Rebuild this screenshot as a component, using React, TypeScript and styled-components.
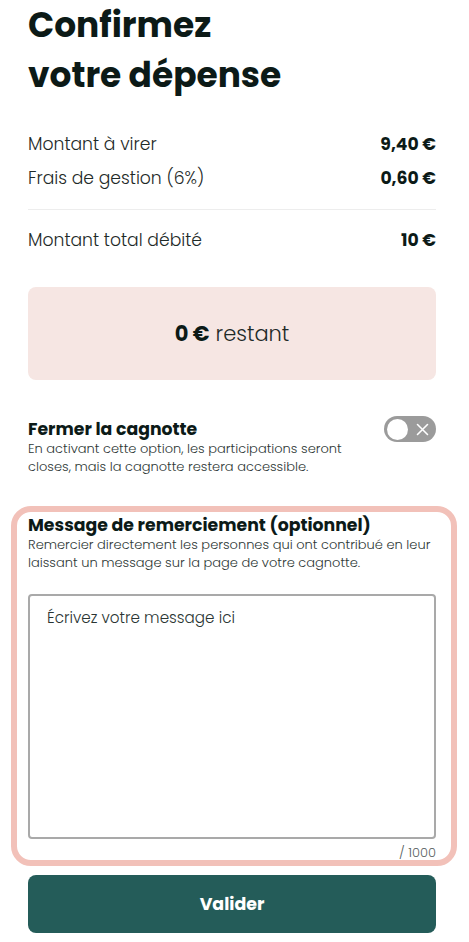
import React from "react";
import styled, { createGlobalStyle } from "styled-components";

const Global = createGlobalStyle`
  html, body { margin: 0; padding: 0; background: #ffffff; }
  body { font-family: "Poppins", "Inter", "Noto Sans", sans-serif; color: #0f1c1a; }
  * { box-sizing: border-box; }
`;

const Page = styled.div`
  width: 408px;
  margin-left: 28px;
  display: flex;
  flex-direction: column;
`;

const Title = styled.h1`
  margin: 0;
  font-size: 34.4px;
  line-height: 50px;
  font-weight: 700;
  color: #0c1a17;
`;

const Summary = styled.div`
  margin-top: 32px;
  display: flex;
  flex-direction: column;
  gap: 10px;
`;

const Row = styled.div`
  display: flex;
  justify-content: space-between;
  align-items: center;
  height: 24px;
  font-size: 17.2px;
`;

const Label = styled.span`
  font-weight: 300;
  color: #1e2a28;
`;

const Value = styled.span`
  font-weight: 700;
  color: #0c1a17;
`;

const Divider = styled.hr`
  border: none;
  height: 1px;
  background: #ededed;
  margin: 19px 0 18px;
`;

const Remaining = styled.div`
  margin-top: 35px;
  height: 93px;
  border-radius: 8px;
  background: #f6e6e3;
  display: flex;
  align-items: center;
  justify-content: center;
  font-size: 21px;
  font-weight: 300;
  color: #1e2a28;
  gap: 6px;
`;

const Strong = styled.strong`
  font-weight: 700;
  color: #0c1a17;
`;

const OptionRow = styled.div`
  margin-top: 38px;
  display: flex;
  justify-content: space-between;
  align-items: flex-start;
`;

const OptionText = styled.div`
  display: flex;
  flex-direction: column;
  max-width: 340px;
`;

const SectionTitle = styled.div`
  font-size: 17.3px;
  line-height: 22px;
  font-weight: 700;
  color: #0c1a17;
`;

const Desc = styled.div`
  font-size: 13px;
  line-height: 18px;
  font-weight: 300;
  color: #2e3836;
`;

const Toggle = styled.div`
  width: 52px;
  height: 26px;
  border-radius: 13px;
  background: #9b9b9b;
  margin-top: -2px;
  display: flex;
  align-items: center;
  justify-content: space-between;
  padding: 0 7px 0 3px;
`;

const Knob = styled.div`
  width: 21px;
  height: 21px;
  border-radius: 50%;
  background: #ffffff;
`;

const Frame = styled.div`
  margin: 30px -21px 0 -17px;
  border: 6px solid #f2c1b9;
  border-radius: 20px;
  padding: 2px 15px 0 11px;
  display: flex;
  flex-direction: column;
`;

const TextArea = styled.div`
  margin-top: 22px;
  height: 245px;
  border: 2px solid #a9a9a9;
  border-radius: 4px;
  padding: 11px 17px;
  font-size: 15.2px;
  line-height: 22px;
  font-weight: 300;
  color: #2a3533;
`;

const Counter = styled.div`
  margin-top: 7px;
  text-align: right;
  font-size: 13px;
  line-height: 14px;
  font-weight: 300;
  color: #56605e;
`;

const Button = styled.button`
  margin-top: 9px;
  height: 58px;
  border: none;
  border-radius: 8px;
  background: #245c59;
  color: #ffffff;
  font-family: inherit;
  font-size: 17.4px;
  font-weight: 700;
`;

export default function App() {
  return (
    <>
      <Global />
      <Page>
        <Title>
          Confirmez
          <br />
          votre dépense
        </Title>
        <Summary>
          <Row>
            <Label>Montant à virer</Label>
            <Value>9,40 €</Value>
          </Row>
          <Row>
            <Label>Frais de gestion (6%)</Label>
            <Value>0,60 €</Value>
          </Row>
        </Summary>
        <Divider />
        <Row>
          <Label>Montant total débité</Label>
          <Value>10 €</Value>
        </Row>
        <Remaining>
          <Strong>0 €</Strong> restant
        </Remaining>
        <OptionRow>
          <OptionText>
            <SectionTitle>Fermer la cagnotte</SectionTitle>
            <Desc>
              En activant cette option, les participations seront
              <br />
              closes, mais la cagnotte restera accessible.
            </Desc>
          </OptionText>
          <Toggle>
            <Knob />
            <svg width="13" height="13" viewBox="0 0 13 13">
              <path d="M1.5 1.5 L11.5 11.5 M11.5 1.5 L1.5 11.5" stroke="#fff" strokeWidth="1.6" strokeLinecap="round" />
            </svg>
          </Toggle>
        </OptionRow>
        <Frame>
          <SectionTitle>Message de remerciement (optionnel)</SectionTitle>
          <Desc>
            Remercier directement les personnes qui ont contribué en leur
            <br />
            laissant un message sur la page de votre cagnotte.
          </Desc>
          <TextArea>Écrivez votre message ici</TextArea>
          <Counter>/ 1000</Counter>
        </Frame>
        <Button>Valider</Button>
      </Page>
    </>
  );
}
